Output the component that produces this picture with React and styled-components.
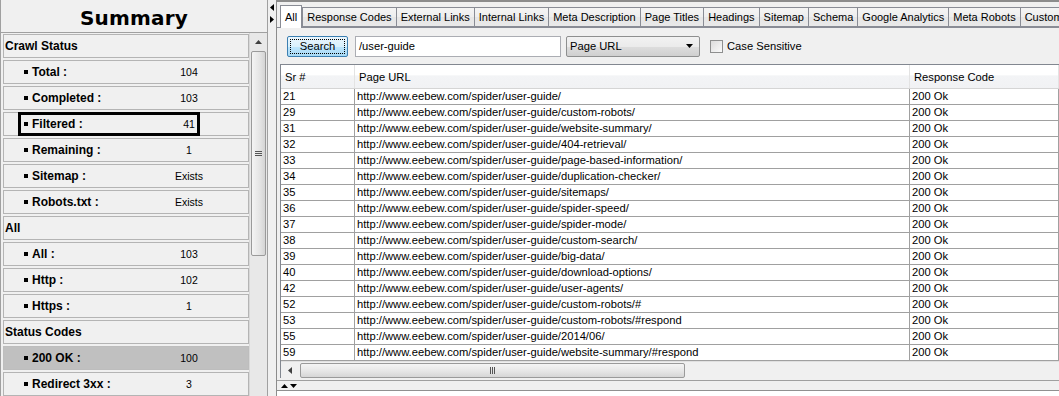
import styled, { createGlobalStyle } from "styled-components";

const GlobalStyle = createGlobalStyle`
  html, body {
    margin: 0;
    padding: 0;
  }
  body {
    background: #f0f0f0;
    font-family: "Liberation Sans", Arial, sans-serif;
    font-size: 11px;
    color: #000;
  }
`;

const summary = [
  { type: "head", label: "Crawl Status" },
  { label: "Total :", value: "104" },
  { label: "Completed :", value: "103" },
  { label: "Filtered :", value: "41", marked: true },
  { label: "Remaining :", value: "1" },
  { label: "Sitemap :", value: "Exists" },
  { label: "Robots.txt :", value: "Exists" },
  { type: "head", label: "All" },
  { label: "All :", value: "103" },
  { label: "Http :", value: "102" },
  { label: "Https :", value: "1" },
  { type: "head", label: "Status Codes" },
  { label: "200 OK :", value: "100", active: true },
  { label: "Redirect 3xx :", value: "3" },
];

const tabs = [
  "All",
  "Response Codes",
  "External Links",
  "Internal Links",
  "Meta Description",
  "Page Titles",
  "Headings",
  "Sitemap",
  "Schema",
  "Google Analytics",
  "Meta Robots",
  "Custom Search",
];

const base = "http://www.eebew.com/spider/user-guide/";
const rows = [
  ["21", ""],
  ["29", "custom-robots/"],
  ["31", "website-summary/"],
  ["32", "404-retrieval/"],
  ["33", "page-based-information/"],
  ["34", "duplication-checker/"],
  ["35", "sitemaps/"],
  ["36", "spider-speed/"],
  ["37", "spider-mode/"],
  ["38", "custom-search/"],
  ["39", "big-data/"],
  ["40", "download-options/"],
  ["42", "user-agents/"],
  ["52", "custom-robots/#"],
  ["53", "custom-robots/#respond"],
  ["55", "2014/06/"],
  ["59", "website-summary/#respond"],
];

export default function App() {
  return (
    <>
      <GlobalStyle />
      <Window>
        <LeftPanel>
          <Title>Summary</Title>
          <ListFrame>
            <RowList>
              {summary.map((item) =>
                item.type === "head" ? (
                  <HeadRow key={item.label}>{item.label}</HeadRow>
                ) : (
                  <ItemRow key={item.label} $active={item.active}>
                    <ItemLabel>{item.label}</ItemLabel>
                    <ItemValue>{item.value}</ItemValue>
                    {item.marked && <Marker />}
                  </ItemRow>
                )
              )}
            </RowList>
            <VScroll>
              <ScrollButton>
                <Arrow viewBox="0 0 7 4">
                  <path d="M0 4 L3.5 0 L7 4 Z" />
                </Arrow>
              </ScrollButton>
              <VThumb>
                <Grip />
              </VThumb>
            </VScroll>
          </ListFrame>
        </LeftPanel>

        <Splitter>
          <SplitArrow viewBox="0 0 4 7">
            <path d="M4 0 L0 3.5 L4 7 Z" />
          </SplitArrow>
          <SplitArrow viewBox="0 0 4 7">
            <path d="M0 0 L4 3.5 L0 7 Z" />
          </SplitArrow>
        </Splitter>

        <RightPanel>
          <TabStrip>
            {tabs.map((t, i) => (
              <Tab key={t} $selected={i === 0}>
                {t}
              </Tab>
            ))}
          </TabStrip>
          <Toolbar>
            <SearchButton>
              <Focus>Search</Focus>
            </SearchButton>
            <TextInput>/user-guide</TextInput>
            <Select>
              Page URL
              <svg width="7" height="4" viewBox="0 0 7 4">
                <path d="M0 0 L7 0 L3.5 4 Z" fill="#000" />
              </svg>
            </Select>
            <CheckLabel>
              <CheckBox />
              Case Sensitive
            </CheckLabel>
          </Toolbar>

          <TableFrame>
            <HeaderRow>
              <HeaderCell>Sr #</HeaderCell>
              <HeaderCell>Page URL</HeaderCell>
              <HeaderCell>Response Code</HeaderCell>
            </HeaderRow>
            <Body>
              {rows.map(([n, path]) => (
                <DataRow key={n}>
                  <Cell>{n}</Cell>
                  <Cell>{base + path}</Cell>
                  <Cell>200 Ok</Cell>
                </DataRow>
              ))}
            </Body>
            <HScroll>
              <HButton>
                <Arrow viewBox="0 0 4 7" $w={4} $h={7}>
                  <path d="M4 0 L0 3.5 L4 7 Z" />
                </Arrow>
              </HButton>
              <HThumb>
                <VGrip />
              </HThumb>
            </HScroll>
          </TableFrame>

          <BottomSplit>
            <svg width="16" height="5" viewBox="0 0 16 5">
              <path d="M0 5 L3.5 1 L7 5 Z M9 1 L16 1 L12.5 5 Z" fill="#000" />
            </svg>
          </BottomSplit>
          <BottomPane />
        </RightPanel>
      </Window>
    </>
  );
}

const Window = styled.div`
  display: flex;
  width: 1059px;
  height: 396px;
  overflow: hidden;
  background: #f0f0f0;
`;

const LeftPanel = styled.div`
  width: 268px;
  flex-shrink: 0;
  display: flex;
  flex-direction: column;
  border-left: 1px solid #a0a0a0;
  border-right: 1px solid #a0a0a0;
  box-sizing: border-box;
`;

const Title = styled.div`
  height: 32px;
  line-height: 37px;
  text-align: center;
  font-family: "DejaVu Sans", Verdana, sans-serif;
  font-weight: bold;
  font-size: 20px;
  letter-spacing: 0.2px;
  flex-shrink: 0;
`;

const ListFrame = styled.div`
  flex: 1;
  display: flex;
  border-top: 1px solid #a0a0a0;
  overflow: hidden;
`;

const RowList = styled.div`
  width: 249px;
  padding: 1px 0 0 2px;
  box-sizing: border-box;
  display: flex;
  flex-direction: column;
  gap: 2px;
`;

const HeadRow = styled.div`
  height: 24px;
  flex-shrink: 0;
  box-sizing: border-box;
  border: 1px solid #b4b4b4;
  background: #f0f0f0;
  display: flex;
  align-items: center;
  padding-left: 1px;
  font-weight: bold;
  font-size: 12px;
`;

const ItemRow = styled.div`
  position: relative;
  height: 24px;
  flex-shrink: 0;
  box-sizing: border-box;
  border: 1px solid ${(p) => (p.$active ? "#bdbdbd" : "#b4b4b4")};
  background: ${(p) => (p.$active ? "#c0c0c0" : "#f0f0f0")};
  display: grid;
  grid-template-columns: 150px 70px;
  align-items: center;
`;

const ItemLabel = styled.span`
  padding-left: 20px;
  font-weight: bold;
  font-size: 12px;
  white-space: nowrap;

  &::before {
    content: "";
    display: inline-block;
    width: 4px;
    height: 4px;
    background: #000;
    margin-right: 4px;
    vertical-align: 2px;
  }
`;

const ItemValue = styled.span`
  text-align: center;
  font-size: 10.5px;
`;

const Marker = styled.div`
  position: absolute;
  left: 14px;
  top: -1px;
  width: 182px;
  height: 24px;
  border: 3px solid #000;
  box-sizing: border-box;
`;

const VScroll = styled.div`
  width: 17px;
  background: #e8e8e8;
  border-left: 1px solid #d8d8d8;
  display: flex;
  flex-direction: column;
  align-items: center;
`;

const ScrollButton = styled.div`
  width: 17px;
  height: 17px;
  display: flex;
  align-items: center;
  justify-content: center;
`;

const Arrow = styled.svg`
  width: ${(p) => p.$w || 7}px;
  height: ${(p) => p.$h || 4}px;
  fill: #404040;
`;

const VThumb = styled.div`
  width: 15px;
  height: 205px;
  margin-top: 1px;
  box-sizing: border-box;
  border: 1px solid #9a9a9a;
  border-radius: 2px;
  background: linear-gradient(to right, #f4f4f4, #e4e4e4 60%, #d4d4d4);
  display: flex;
  align-items: center;
  justify-content: center;
`;

const Grip = styled.div`
  width: 7px;
  height: 5px;
  background: repeating-linear-gradient(
    to bottom,
    #555 0 1px,
    transparent 1px 2px
  );
`;

const Splitter = styled.div`
  width: 8px;
  flex-shrink: 0;
  display: flex;
  flex-direction: column;
  align-items: center;
  gap: 5px;
  padding-top: 4px;
  box-sizing: border-box;
`;

const SplitArrow = styled.svg`
  width: 4px;
  height: 7px;
  fill: #000;
`;

const RightPanel = styled.div`
  flex: 1;
  min-width: 0;
  display: flex;
  flex-direction: column;
  border-top: 2px solid #8c8c8c;
  border-left: 1px solid #8c8c8c;
  overflow: hidden;
`;

const TabStrip = styled.div`
  height: 25px;
  display: flex;
  align-items: flex-end;
  padding-left: 3px;
  flex-shrink: 0;
  border-bottom: 1px solid #898c95;
  white-space: nowrap;
`;

const Tab = styled.div`
  flex-shrink: 0;
  height: ${(p) => (p.$selected ? 23 : 20)}px;
  line-height: ${(p) => (p.$selected ? 22 : 19)}px;
  margin-bottom: ${(p) => (p.$selected ? -1 : 0)}px;
  padding: 0 4px;
  box-sizing: border-box;
  border: 1px solid #898c95;
  border-bottom: ${(p) => (p.$selected ? "none" : "1px solid #898c95")};
  margin-left: ${(p) => (p.$selected ? 0 : -1)}px;
  background: ${(p) =>
    p.$selected ? "#fff" : "linear-gradient(#f4f4f4, #eeeeee 50%, #e6e6e6 51%, #e9e9e9)"};
  position: relative;
  z-index: ${(p) => (p.$selected ? 1 : 0)};
  font-size: 11px;
  &:nth-child(2) {
    margin-left: 0;
  }
`;

const Toolbar = styled.div`
  height: 36px;
  flex-shrink: 0;
  box-sizing: border-box;
  display: flex;
  align-items: center;
  padding: 0 0 0 10px;
  background: #f0f0f0;
`;

const SearchButton = styled.div`
  width: 61px;
  height: 21px;
  box-sizing: border-box;
  border: 1px solid #3c7fb1;
  border-radius: 2px;
  background: linear-gradient(#eaf6fd, #d9f0fc 50%, #bee6fd 51%, #a7d9f5);
  padding: 2px;
`;

const Focus = styled.div`
  height: 100%;
  box-sizing: border-box;
  border: 1px dotted #000;
  display: flex;
  align-items: center;
  justify-content: center;
  font-size: 11.2px;
`;

const TextInput = styled.div`
  width: 206px;
  height: 21px;
  box-sizing: border-box;
  margin-left: 7px;
  border: 1px solid #abadb3;
  background: #fff;
  padding-left: 3px;
  display: flex;
  align-items: center;
  font-size: 11.2px;
`;

const Select = styled.div`
  width: 134px;
  height: 21px;
  margin-left: 5px;
  box-sizing: border-box;
  border: 1px solid #8e8f8f;
  border-radius: 2px;
  background: linear-gradient(#f2f2f2, #ebebeb 50%, #dddddd 51%, #cfcfcf);
  display: flex;
  align-items: center;
  justify-content: space-between;
  padding: 0 6px 0 3px;
  font-size: 11.2px;
`;

const CheckLabel = styled.label`
  display: flex;
  align-items: center;
  margin-left: 10px;
  gap: 4px;
  font-size: 11.2px;
`;

const CheckBox = styled.span`
  width: 13px;
  height: 13px;
  box-sizing: border-box;
  border: 1px solid #8e8f8f;
  background: linear-gradient(135deg, #dcdcdc, #fafafa);
`;

const TableFrame = styled.div`
  margin-left: 3px;
  height: 314px;
  flex-shrink: 0;
  box-sizing: border-box;
  border: 1px solid #828790;
  border-right: none;
  background: #fff;
  display: flex;
  flex-direction: column;
`;

const HeaderRow = styled.div`
  height: 24px;
  flex-shrink: 0;
  display: grid;
  grid-template-columns: 74px 555px 1fr;
  background: linear-gradient(#ffffff, #ffffff 45%, #f3f4f6 46%, #f1f2f4);
  border-bottom: 1px solid #d5d5d5;
  box-sizing: border-box;
`;

const HeaderCell = styled.div`
  display: flex;
  align-items: center;
  padding-left: 4px;
  border-right: 1px solid #e3e3e3;
  white-space: nowrap;
  font-size: 11.2px;
`;

const Body = styled.div`
  flex: 1;
  display: flex;
  flex-direction: column;
`;

const DataRow = styled.div`
  height: 16px;
  display: grid;
  grid-template-columns: 74px 555px 1fr;
  border-bottom: 1px solid #a0a0a0;
  box-sizing: border-box;
  line-height: 15px;
  font-size: 11.2px;
`;

const Cell = styled.div`
  padding-left: 2px;
  border-right: 1px solid #a0a0a0;
  white-space: nowrap;
  overflow: hidden;
`;

const HScroll = styled.div`
  height: 17px;
  flex-shrink: 0;
  display: flex;
  align-items: center;
  background: #f0f0f0;
  border-top: 1px solid #e0e0e0;
`;

const HButton = styled.div`
  width: 17px;
  height: 17px;
  display: flex;
  align-items: center;
  justify-content: center;
`;

const HThumb = styled.div`
  width: 385px;
  height: 15px;
  margin-left: 2px;
  box-sizing: border-box;
  border: 1px solid #9a9a9a;
  border-radius: 2px;
  background: linear-gradient(#f4f4f4, #e6e6e6 55%, #d6d6d6);
  display: flex;
  align-items: center;
  justify-content: center;
`;

const VGrip = styled.div`
  width: 5px;
  height: 7px;
  background: repeating-linear-gradient(
    to right,
    #555 0 1px,
    transparent 1px 2px
  );
`;

const BottomSplit = styled.div`
  height: 9px;
  flex-shrink: 0;
  border-top: 1px solid #a0a0a0;
  margin-top: 2px;
  border-bottom: 1px solid #909090;
  display: flex;
  align-items: center;
  padding-left: 4px;
`;

const BottomPane = styled.div`
  flex: 1;
  background: #fff;
`;
